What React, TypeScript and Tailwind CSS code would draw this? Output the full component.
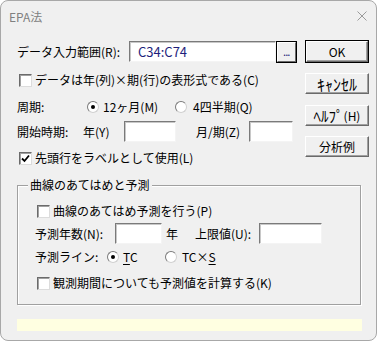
import React from "react";

const font = { fontFamily: '"Noto Sans CJK JP", "Liberation Sans", sans-serif' };

const Check = ({ checked = false }: { checked?: boolean }) => (
  <span className="inline-flex w-[13px] h-[13px] shrink-0 items-center justify-center bg-white border border-t-[#6b6b6b] border-l-[#6b6b6b] border-r-[#dcdcdc] border-b-[#dcdcdc] shadow-[inset_1px_1px_0_#a0a0a0]">
    {checked && (
      <svg width="9" height="9" viewBox="0 0 9 9">
        <path d="M1 4.5 L3.5 7 L8 1.5" fill="none" stroke="#000" strokeWidth="1.8" />
      </svg>
    )}
  </span>
);

const Radio = ({ checked = false }: { checked?: boolean }) => (
  <span className="inline-flex w-[12px] h-[12px] shrink-0 items-center justify-center rounded-full bg-white border border-t-[#7a7a7a] border-l-[#7a7a7a] border-r-[#d0d0d0] border-b-[#d0d0d0]">
    {checked && <span className="w-[4px] h-[4px] rounded-full bg-black" />}
  </span>
);

const Field = ({ w, children }: { w: string; children?: React.ReactNode }) => (
  <div
    className={`${w} h-[21px] shrink-0 bg-white border border-t-[#7a7a7a] border-l-[#7a7a7a] border-r-[#f4f4f4] border-b-[#f4f4f4] shadow-[inset_1px_1px_0_#c8c8c8] flex items-center`}
  >
    {children}
  </div>
);

const Btn = ({
  children,
  primary = false,
  h = "h-[21px]",
}: {
  children: React.ReactNode;
  primary?: boolean;
  h?: string;
}) => (
  <div className={`${primary ? "border border-black" : ""} w-[64px] ${h}`}>
    <div className="w-full h-full flex items-center justify-center bg-[#f0f0f0] border border-t-white border-l-white border-r-[#6a6a6a] border-b-[#6a6a6a] shadow-[inset_-1px_-1px_0_#a0a0a0] text-[12px] text-black">
      {children}
    </div>
  </div>
);

export default function App() {
  return (
    <div className="w-[377px] h-[341px] bg-white" style={font}>
      <div className="w-[377px] h-[341px] rounded-[8px] border border-[#a8a8a8] bg-[#f0f0f0] overflow-hidden flex flex-col text-[12px] leading-none text-black">
        {/* title bar */}
        <div className="h-[31px] shrink-0 flex items-center justify-between pl-[8px] pr-[9px]">
          <span className="text-[12px] text-[#808080]">EPA法</span>
          <svg width="10" height="10" viewBox="0 0 10 10" className="mb-[1px]">
            <path d="M0.5 0.5 L9.5 9.5 M9.5 0.5 L0.5 9.5" stroke="#9a9a9a" strokeWidth="1" />
          </svg>
        </div>

        {/* top section */}
        <div className="flex pl-[16px]">
          <div className="w-[288px] flex flex-col">
            <div className="mt-[9px] h-[21px] flex items-center">
              <span className="w-[112px] shrink-0">データ入力範囲(R):</span>
              <Field w="w-[147px]">
                <span className="pl-[8px] text-[#1e1e7c] text-[13px]">C34:C74</span>
              </Field>
              <div className="w-[21px] h-[22px] border border-black">
                <div className="w-full h-full bg-[#f0f0f0] border border-t-white border-l-white border-r-[#6a6a6a] border-b-[#6a6a6a] flex items-end justify-center pb-[4px]">
                  <span className="text-[8px] font-bold leading-none text-[#1e1e7c] tracking-[-0.5px]">...</span>
                </div>
              </div>
            </div>
            <div className="mt-[8px] h-[20px] flex items-center gap-[3px] pl-[2px]">
              <Check />
              <span>データは年(列)×期(行)の表形式である(C)</span>
            </div>
            <div className="mt-[7px] h-[20px] flex items-center">
              <span className="w-[70px] shrink-0">周期:</span>
              <Radio checked />
              <span className="ml-[4px] w-[72px]">12ヶ月(M)</span>
              <Radio />
              <span className="ml-[6px]">4四半期(Q)</span>
            </div>
            <div className="mt-[4px] h-[21px] flex items-center">
              <span className="w-[66px] shrink-0">開始時期:</span>
              <span className="w-[41px] shrink-0">年(Y)</span>
              <Field w="w-[52px]" />
              <span className="ml-[20px] w-[53px] shrink-0">月/期(Z)</span>
              <Field w="w-[44px]" />
            </div>
            <div className="mt-[6px] h-[20px] flex items-center gap-[3px] pl-[2px]">
              <Check checked />
              <span>先頭行をラベルとして使用(L)</span>
            </div>
          </div>
          <div className="flex flex-col">
            <div className="mt-[8px]">
              <Btn primary h="h-[23px]">OK</Btn>
            </div>
            <div className="mt-[10px]">
              <Btn>
                <span className="text-[16px]">ｷｬﾝｾﾙ</span>
              </Btn>
            </div>
            <div className="mt-[11px]">
              <Btn>
                <span className="text-[15px]">ﾍﾙﾌﾟ</span>
                <span>(H)</span>
              </Btn>
            </div>
            <div className="mt-[10px]">
              <Btn>分析例</Btn>
            </div>
          </div>
        </div>

        {/* group box */}
        <div className="relative ml-[16px] mt-[17px] w-[344px] h-[120px] border border-[#a0a0a0] shadow-[inset_1px_1px_0_#fff,1px_1px_0_#fff] pl-[17px] pt-[15px] flex flex-col">
          <span className="absolute left-[10px] -top-[7px] bg-[#f0f0f0] px-[2px]">曲線のあてはめと予測</span>
          <div className="h-[20px] flex items-center gap-[3px] pl-[2px]">
            <Check />
            <span>曲線のあてはめ予測を行う(P)</span>
          </div>
          <div className="mt-[2px] h-[21px] flex items-center">
            <span className="w-[80px] shrink-0">予測年数(N):</span>
            <Field w="w-[47px]" />
            <span className="ml-[4px] w-[29px] shrink-0">年</span>
            <span className="w-[64px] shrink-0">上限値(U):</span>
            <Field w="w-[63px]" />
          </div>
          <div className="mt-[3px] h-[20px] flex items-center">
            <span className="w-[72px] shrink-0">予測ライン:</span>
            <Radio checked />
            <span className="ml-[4px] w-[42px]">
              <span className="underline underline-offset-2">T</span>C
            </span>
            <Radio />
            <span className="ml-[5px]">
              TC×<span className="underline underline-offset-2">S</span>
            </span>
          </div>
          <div className="mt-[6px] h-[20px] flex items-center gap-[3px] pl-[2px]">
            <Check />
            <span>観測期間についても予測値を計算する(K)</span>
          </div>
        </div>

        {/* status bar */}
        <div className="ml-[16px] mt-[14px] w-[345px] h-[12px] bg-[#ffffe1]" />
      </div>
    </div>
  );
}
